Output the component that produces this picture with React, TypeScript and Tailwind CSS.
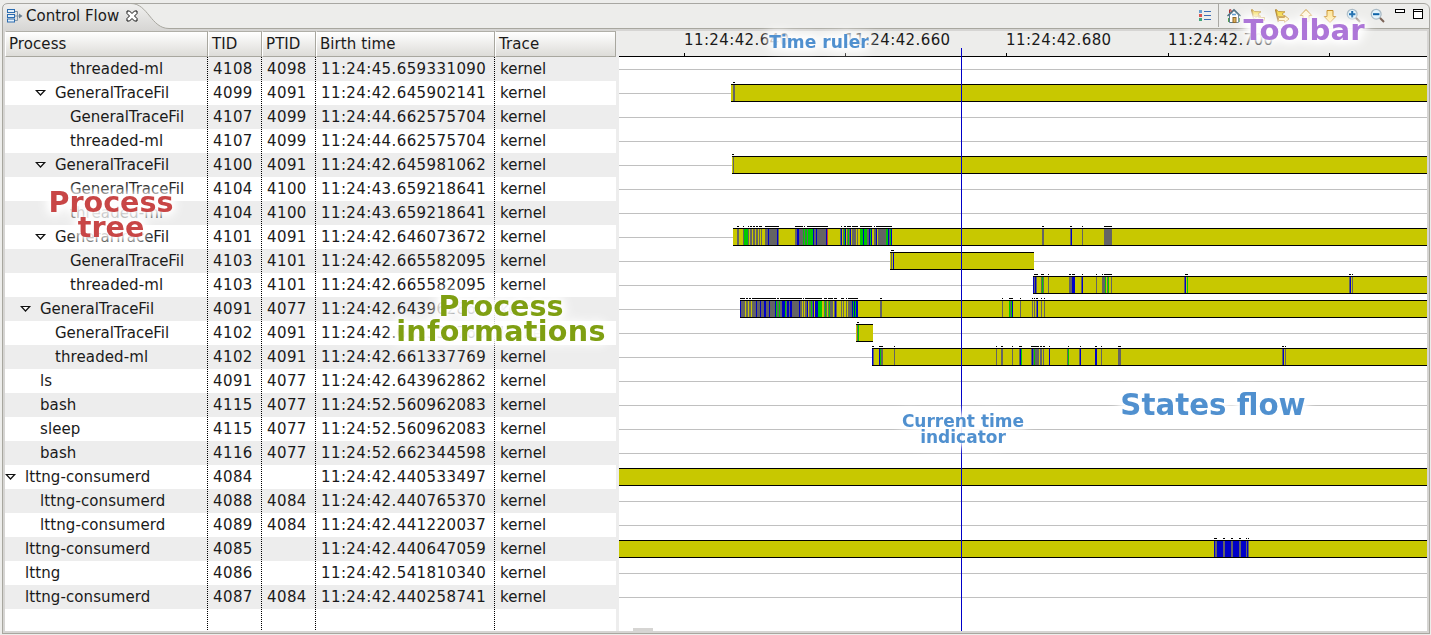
import React from "react";

type Kind = "y" | "g" | "b" | "n" | "r";
type Segment = [number, number, Kind];
type Span = [number, number];

interface Row {
  name: string;
  depth: number;
  open?: boolean;
  tid: string;
  ptid: string;
  birth: string;
  bar?: Span;
  segments?: Segment[];
  marks?: Span[];
}

const FILL: Record<Kind, string> = {
  y: "#c8c800",
  g: "#646464",
  b: "#0000c8",
  n: "#00c800",
  r: "#c83c3c",
};

/* Compact notation: "gray 12 to 14" is written g12-14, a one pixel slice is b43. */
const seg = (origin: number, text: string): Segment[] =>
  text.split(" ").map((part) => {
    const [from, to] = part.slice(1).split("-").map(Number);
    return [origin + from, origin + (to ?? from + 1), part[0] as Kind];
  });

const spans = (origin: number, text: string): Span[] =>
  text.split(" ").map((part) => {
    const [from, to] = part.split("-").map(Number);
    return [origin + from, origin + (to ?? from + 1)];
  });

const END = 1427;

const rows: Row[] = [
  { name: "threaded-ml", depth: 4, tid: "4108", ptid: "4098", birth: "11:24:45.659331090" },
  { name: "GeneralTraceFil", depth: 3, open: true, tid: "4099", ptid: "4091", birth: "11:24:42.645902141", bar: [731, END], segments: seg(0, "g733-735"), marks: spans(0, "733-735") },
  { name: "GeneralTraceFil", depth: 4, tid: "4107", ptid: "4099", birth: "11:24:44.662575704" },
  { name: "threaded-ml", depth: 4, tid: "4107", ptid: "4099", birth: "11:24:44.662575704" },
  { name: "GeneralTraceFil", depth: 3, open: true, tid: "4100", ptid: "4091", birth: "11:24:42.645981062", bar: [732, END], segments: seg(0, "g733"), marks: spans(0, "732-734") },
  { name: "GeneralTraceFil", depth: 4, tid: "4104", ptid: "4100", birth: "11:24:43.659218641" },
  { name: "threaded-ml", depth: 4, tid: "4104", ptid: "4100", birth: "11:24:43.659218641" },
  {
    name: "GeneralTraceFil", depth: 3, open: true, tid: "4101", ptid: "4091", birth: "11:24:42.646073672", bar: [733, END],
    segments: [
      ...seg(725, "g12-14 g18 n19-23 g23 g25-27 g28-30 g31-33 g34-37 y35 g40-54 b43 b52 g70-78 b72-74 n78 g79 n80-82 g82 n83-88 b88 g89-91 b91 g92-101 b101 r102 g115 b116 g118 n119 b120 g122 n123 g124 b125 g127-131 g132 n135-138 b138 n139-142 g142-144 b144 n145 b146 g149 b151 g150 g153-161 n161-163 b163 g164 n165 b166"),
      ...seg(980, "g62-64 g90 b91 g102 g124-132"),
    ],
    marks: [
      ...spans(725, "12-14 18 23 25-27 28-30 31-33 34-37 40-54 70-78 79 82-103 116 119-121 122-126 127-133 135-147 149 151-167"),
      ...spans(980, "62-64 90-92 102 124-132"),
    ],
  },
  { name: "GeneralTraceFil", depth: 4, tid: "4103", ptid: "4101", birth: "11:24:42.665582095", bar: [890, 1034], segments: seg(725, "g166 b168"), marks: spans(725, "166-169") },
  {
    name: "threaded-ml", depth: 4, tid: "4103", ptid: "4101", birth: "11:24:42.665582095", bar: [1033, END],
    segments: [...seg(980, "b53 g54 b55 g56 g61 n62 g63 g68 g89-92 b92-95 g101 b102 g116 g122-125 n125 g127 n128 g131"), ...seg(1170, "g14 b15 n17 g179 b180 g182")],
    marks: [...spans(980, "54-58 61-64 68 89-91 92-95 102 116 122 124-132"), ...spans(1170, "15-18 179-181 182")],
  },
  {
    name: "GeneralTraceFil", depth: 2, open: true, tid: "4091", ptid: "4077", birth: "11:24:42.643962862", bar: [740, END],
    segments: [
      ...seg(725, "b15 g16-20 g21-23 g24-26 g27-31 b31 g32-35 b35 g36-39 b39-41 g41-44 b44 g45-50 b50 n51 g52-54 n54 g55-57 b57-60 n60 g61 b62-64 g64 b65-67 g67-74 b74 g75-77 g78 g80-82 b82 g84-86 n86 g87 b88 b90-93 n93-97 g99 n100 g101 g103 n104 g105-108 g109 b110 g111 g116 g118 g121 g123-127 b127 n128 b129 n130 b131-133 g155-157"),
      ...seg(980, "g22 n29 g30 n31 b32 g40 g52 g54 g56 b57 g61 g64"),
    ],
    marks: [
      ...spans(725, "15-20 21-23 24-26 27-51 52-54 55-77 78 80-97 99-102 103-108 109-112 116-119 121 123-133 155-157"),
      ...spans(980, "22 29-33 40 52 54 56-58 61 64"),
    ],
  },
  { name: "GeneralTraceFil", depth: 3, tid: "4102", ptid: "4091", birth: "11:24:42.661337769", bar: [856, 873], segments: seg(725, "g132 n133"), marks: spans(725, "132-134") },
  {
    name: "threaded-ml", depth: 3, tid: "4102", ptid: "4091", birth: "11:24:42.661337769", bar: [872, END],
    segments: [...seg(725, "b147 g148 b154 n155 g156-158 g169"), ...seg(980, "g16 g21-23 g32 g39 b40 n41 g51 b52 g53 n54 g55-59 g60-62 g63 b69 g87 n88 g99 b100 b115-117 g121 g138-141"), ...seg(1170, "g112 b113 g115")],
    marks: [...spans(725, "147-149 154-158 169"), ...spans(980, "16 21-23 32 39-42 51-59 60-62 63-65 69 88 100 115-117 121 138-141"), ...spans(1170, "112-114 115")],
  },
  { name: "ls", depth: 2, tid: "4091", ptid: "4077", birth: "11:24:42.643962862" },
  { name: "bash", depth: 2, tid: "4115", ptid: "4077", birth: "11:24:52.560962083" },
  { name: "sleep", depth: 2, tid: "4115", ptid: "4077", birth: "11:24:52.560962083" },
  { name: "bash", depth: 2, tid: "4116", ptid: "4077", birth: "11:24:52.662344598" },
  { name: "lttng-consumerd", depth: 1, open: true, tid: "4084", ptid: "", birth: "11:24:42.440533497", bar: [619, END] },
  { name: "lttng-consumerd", depth: 2, tid: "4088", ptid: "4084", birth: "11:24:42.440765370" },
  { name: "lttng-consumerd", depth: 2, tid: "4089", ptid: "4084", birth: "11:24:42.441220037" },
  {
    name: "lttng-consumerd", depth: 1, tid: "4085", ptid: "", birth: "11:24:42.440647059", bar: [619, END],
    segments: seg(1180, "b34 g35-37 b37-43 g43-45 b45-51 g51-53 b53-59 g59-61 b61-66 g66 b67 g68"),
    marks: spans(1180, "34-37 43-45 51-53 59-61 66 68"),
  },
  { name: "lttng", depth: 1, tid: "4086", ptid: "", birth: "11:24:42.541810340" },
  { name: "lttng-consumerd", depth: 1, tid: "4087", ptid: "4084", birth: "11:24:42.440258741" },
];

const PAD = ["pl-0", "pl-[20px]", "pl-[35px]", "pl-[50px]", "pl-[65px]"];
const ARROW = ["left-0", "left-0", "left-[15px]", "left-[30px]", "left-[45px]"];
const GRID = "grid grid-cols-[203px_54px_54px_179px_121px]";
const GLOW = "[filter:drop-shadow(0_0_3px_#fff)_drop-shadow(0_0_4px_#fff)_drop-shadow(0_0_6px_#fff)]";

function StateRow({ row }: { row: Row }) {
  return (
    <svg className="block shrink-0" width="808" height="24" viewBox="619 0 808 24" shapeRendering="crispEdges">
      <rect x="619" y="12" width="808" height="1" fill="#c0c0c0" />
      {row.bar && (
        <>
          <rect x={row.bar[0]} y="3" width={row.bar[1] - row.bar[0]} height="18" fill="#000" />
          <rect x={row.bar[0]} y="4" width={row.bar[1] - row.bar[0]} height="16" fill={FILL.y} />
        </>
      )}
      {row.segments?.map(([from, to, kind], i) => (
        <rect key={i} x={from} y="4" width={to - from} height="16" fill={FILL[kind]} />
      ))}
      {row.marks?.map(([from, to], i) => (
        <rect key={i} x={from} y="1" width={to - from} height="1" fill="#000" />
      ))}
    </svg>
  );
}

function TreeRow({ row, shaded }: { row: Row; shaded: boolean }) {
  const cell = "pl-[5px] tracking-[0.4px]";
  const nameTracking = row.name.startsWith("General") ? "tracking-[-0.05px]" : "tracking-[0.1px]";
  return (
    <div className={`${GRID} h-6 leading-6 ${shaded ? "bg-[#ededed]" : "bg-white"}`}>
      <div className={`relative ${nameTracking} ${PAD[row.depth]}`}>
        {row.open && (
          <svg className={`absolute top-[8px] ${ARROW[row.depth]}`} width="12" height="8" viewBox="0 0 12 8">
            <path d="M1.3 1.5H9.7L5.5 6Z" fill="#fff" stroke="#111" strokeWidth="1.2" />
          </svg>
        )}
        {row.name}
      </div>
      <div className={cell}>{row.tid}</div>
      <div className={cell}>{row.ptid}</div>
      <div className={cell}>{row.birth}</div>
      <div className="pl-[5px]">kernel</div>
    </div>
  );
}

function Flag({ back }: { back?: boolean }) {
  return (
    <svg width="16" height="16" viewBox="0 0 16 16">
      <path d="M1.5 1.5L4.3 14" stroke="#a87c28" strokeWidth="1.2" fill="none" />
      <path d="M2 1.5L4.5 3.5L11 3.8L8 6L11 8.5L3.5 8.5Z" fill="#f5d94b" stroke="#b98b28" strokeWidth="0.8" />
      <path d={back ? "M4 11L8.5 7.5V9.5H14.5V12.5H8.5V14.5Z" : "M15 11L10.5 7.5V9.5H4.5V12.5H10.5V14.5Z"} fill="#fff2bd" stroke="#c08a2a" />
    </svg>
  );
}

function ArrowIcon({ down }: { down?: boolean }) {
  return (
    <svg className={down ? "rotate-180" : ""} width="16" height="16" viewBox="0 0 16 16">
      <path d="M8 1.5L13.8 7.5H11V13.5H5V7.5H2.2Z" fill={down ? "#ffe69a" : "#fff3cf"} stroke="#c78d25" strokeLinejoin="round" />
    </svg>
  );
}

function ZoomIcon({ out }: { out?: boolean }) {
  return (
    <svg width="16" height="16" viewBox="0 0 16 16">
      <path d="M9.8 9.8L14 14" stroke="#7b6458" strokeWidth="2" />
      <circle cx="6.2" cy="6.2" r="4.9" fill="#e2f3fb" stroke="#a9bac5" strokeWidth="1.3" />
      <path d={out ? "M3 6.2H9.4" : "M3 6.2H9.4M6.2 3V9.4"} stroke="#0c62a8" strokeWidth="2" />
    </svg>
  );
}

function Toolbar() {
  return (
    <div className="relative flex h-[24px] items-center pt-[1px]">
      <svg width="16" height="16" viewBox="0 0 16 16">
        <g shapeRendering="crispEdges">
          <rect x="2" y="2" width="3" height="3" fill="#69a0d0" />
          <rect x="2" y="6" width="3" height="3" fill="#d9534f" />
          <rect x="2" y="10" width="3" height="3" fill="#43a47b" />
          <path d="M7 3.5H14M7 7.5H14M7 11.5H14" stroke="#3c6eb4" />
        </g>
      </svg>
      <div className="mr-[7px] ml-[5px] h-[23px] w-px bg-[#aaa9a4]" />
      <div className="flex gap-2">
        <svg width="16" height="16" viewBox="0 0 16 16">
          <path d="M3.5 7V14.5H12.5V7L8 2.5Z" fill="#fff" stroke="#55788c" />
          <path d="M1.5 8L8 1.7L14.5 8" fill="none" stroke="#4a6d80" strokeWidth="1.4" />
          <path d="M3.5 5V1.8H5V4" fill="none" stroke="#a33" />
          <rect x="7" y="9.5" width="3" height="5" fill="#dba94a" stroke="#886020" />
          <path d="M6 6.5H10" stroke="#5f9bd0" strokeWidth="1.6" />
          <path d="M2.5 10V14M13.5 10V14" stroke="#54a34c" />
        </svg>
        <Flag back />
        <Flag />
        <ArrowIcon />
        <ArrowIcon down />
        <ZoomIcon />
        <ZoomIcon out />
      </div>
      <svg className="mr-[8px] ml-[7px]" width="30" height="18" viewBox="0 0 30 18" shapeRendering="crispEdges">
        <rect x="2.5" y="2.5" width="9" height="3" fill="#fff" stroke="#000" />
        <rect x="20.5" y="2.5" width="9" height="9" fill="#fff" stroke="#000" />
        <path d="M20 4.5H30" stroke="#000" />
      </svg>
    </div>
  );
}

function TabBar() {
  return (
    <div className="relative flex h-[28px] justify-between">
      <svg className="absolute inset-0" width="1431" height="28" viewBox="0 3 1431 28">
        <defs>
          <linearGradient id="tab" x1="0" y1="0" x2="0" y2="1">
            <stop offset="0" stopColor="#f0f0ef" />
            <stop offset="1" stopColor="#d6d5d3" />
          </linearGradient>
        </defs>
        <path d="M2.5 31V8Q3 3.5 8 3.5H1424Q1429 4 1429.5 9V31Z" fill="#ededeb" />
        <path d="M2.5 31V8Q3 3.5 8 3.5H131C148 3.5 151 28.5 169 28.5H1429V31Z" fill="url(#tab)" />
        <rect x="169" y="29" width="1260" height="2" fill="#d6d5d3" />
        <path d="M2.5 31V8Q3 3.5 8 3.5H1424Q1429 4 1429.5 9V31" fill="none" stroke="#a8a7a2" />
        <path d="M131 3.5C148 3.5 151 28.5 169 28.5H1429" fill="none" stroke="#a8a79f" />
      </svg>
      <div className="relative flex h-[26px] items-center pl-[6px]">
        <svg width="18" height="16" viewBox="0 0 18 16">
          <g fill="#e4f0fa" stroke="#2d6db0">
            <rect x="1.5" y="1.5" width="7" height="3" />
            <rect x="1.5" y="6.5" width="7" height="3" />
            <rect x="1.5" y="11" width="7" height="3" />
          </g>
          <path d="M9 3.5H11.5V12.5H9M9 8H14" fill="none" stroke="#8296a8" />
          <path d="M13 5.5V10.5L16.5 8Z" fill="#6c8294" />
        </svg>
        <span className="ml-[2px] w-[94px] whitespace-nowrap">Control Flow</span>
        <svg className="ml-[6px]" width="12" height="12" viewBox="0 0 12 12">
          <path d="M1 1H3.5L6 3.5L8.5 1H11V3.5L8.5 6L11 8.5V11H8.5L6 8.5L3.5 11H1V8.5L3.5 6L1 3.5Z" fill="#fff" stroke="#111" />
        </svg>
      </div>
      <Toolbar />
    </div>
  );
}

function HeaderCell({ label }: { label: string }) {
  return (
    <div className="border-y border-r border-l border-t-[#b0afa8] border-r-[#a8a79f] border-b-[#a8a79f] border-l-white bg-linear-to-b from-white to-[#dddcd8] pt-px pl-[3px] leading-[23px] tracking-[0.08px]">
      {label}
    </div>
  );
}

function ProcessTable() {
  return (
    <div className="relative flex w-[611px] shrink-0 flex-col bg-white">
      <div className={`${GRID} h-[26px]`}>
        {["Process", "TID", "PTID", "Birth time", "Trace"].map((label) => (
          <HeaderCell key={label} label={label} />
        ))}
      </div>
      {rows.map((row, i) => (
        <TreeRow key={i} row={row} shaded={i % 2 === 0} />
      ))}
      <svg className="absolute top-[26px] left-0" width="611" height="574" viewBox="0 0 611 574" shapeRendering="crispEdges">
        <path d="M202.5 0V574M256.5 0V574M310.5 0V574M489.5 0V574" stroke="#000" strokeDasharray="1 1" />
      </svg>
    </div>
  );
}

function TimeGraph() {
  return (
    <div className="relative flex w-[808px] flex-col bg-white">
      <div className="flex h-[26px] shrink-0 justify-start border-b border-black bg-[#ededeb] pl-[65px]">
        {["11:24:42.640", "11:24:42.660", "11:24:42.680", "11:24:42.700"].map((label, i) => (
          <div key={label} className={`${i === 2 ? "w-[162px]" : "w-[161px]"} shrink-0 leading-[18px] tracking-[0.4px]`}>
            {label}
          </div>
        ))}
      </div>
      <svg className="absolute top-[22px] left-0" width="808" height="3" viewBox="619 0 808 3" shapeRendering="crispEdges">
        <path d="M684.5 0V3M845.5 0V3M1006.5 0V3M1168.5 0V3M1329.5 0V3" stroke="#000" />
      </svg>
      {rows.map((row, i) => (
        <StateRow key={i} row={row} />
      ))}
      <div className="absolute top-[17px] bottom-0 left-[342px] w-px bg-[#0000c8]" />
      <div className="absolute bottom-0 left-[14px] h-[3px] w-5 bg-[#d6d5d3]" />
    </div>
  );
}

function Callout({ className, lines }: { className: string; lines: string[] }) {
  return (
    <div className={`absolute -translate-x-1/2 text-center font-bold whitespace-nowrap ${GLOW} ${className}`}>
      {lines.map((line) => (
        <div key={line}>{line}</div>
      ))}
    </div>
  );
}

export default function App() {
  return (
    <div className="relative flex h-[635px] w-[1431px] flex-col overflow-hidden bg-[#ededeb] pt-[3px] font-['DejaVu_Sans',sans-serif] text-[15px] text-[#1a1a1a]">
      <TabBar />
      <div className="ml-[2px] flex h-[603px] w-[1428px] border-r border-b border-l border-[#a8a79f] bg-[#d6d5d3] px-[2px] pb-[2px]">
        <ProcessTable />
        <div className="w-[3px] shrink-0 bg-[#ededed]" />
        <TimeGraph />
      </div>
      <Callout className="top-[190px] left-[111px] text-[28.6px] leading-[25px] text-[#c84646]" lines={["Process", "tree"]} />
      <Callout className="top-[294px] left-[501px] text-[28.6px] leading-[25px] text-[#7f9f12] [&>div:last-child]:tracking-[0.3px]" lines={["Process", "informations"]} />
      <Callout className="top-[32px] left-[819px] text-[17.1px] leading-[20px] text-[#5090cf]" lines={["Time ruler"]} />
      <Callout className="top-[18px] left-[1304px] text-[29.2px] leading-[25px] text-[#ad76d8]" lines={["Toolbar"]} />
      <Callout className="top-[393px] left-[1213px] text-[29.3px] leading-[25px] text-[#5090cf]" lines={["States flow"]} />
      <Callout className="top-[413px] left-[963px] text-[17px] leading-[16px] text-[#5090cf]" lines={["Current time", "indicator"]} />
    </div>
  );
}
